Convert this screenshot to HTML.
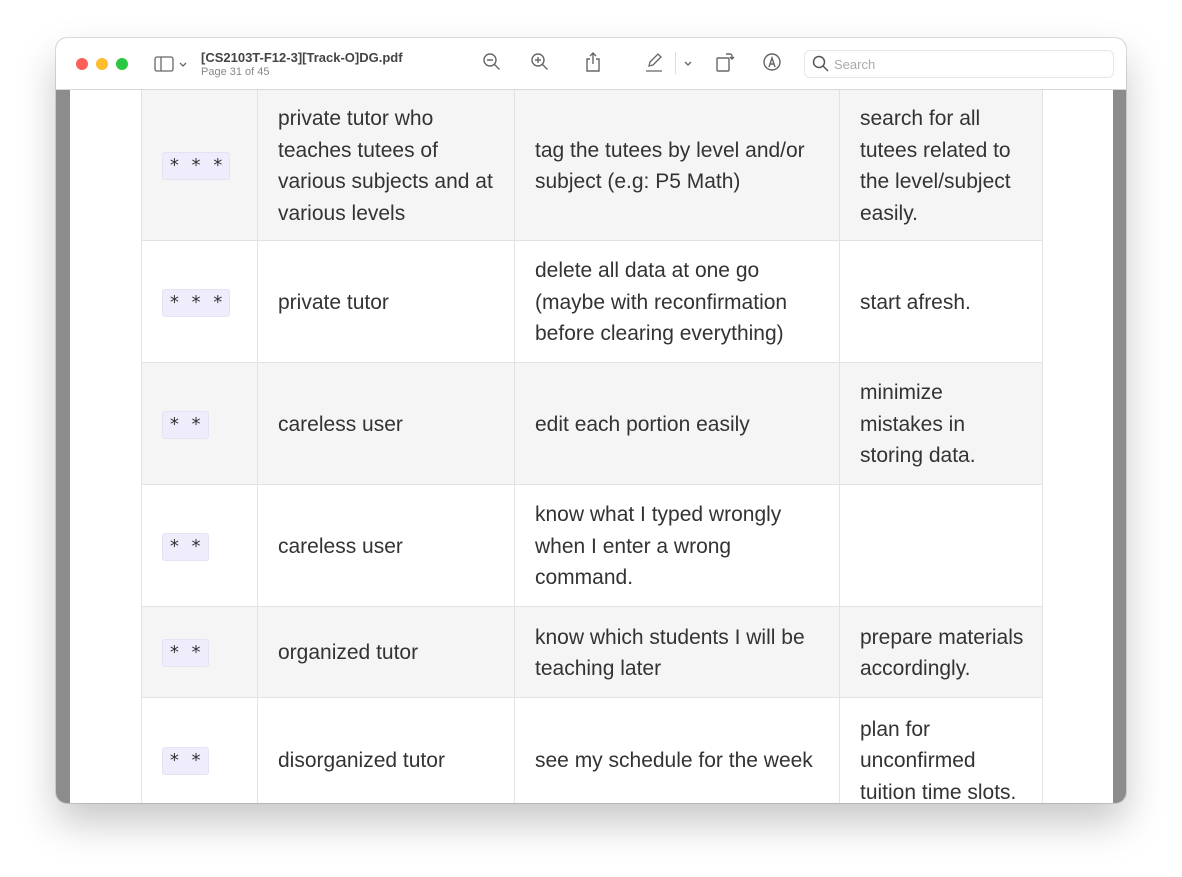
<!DOCTYPE html>
<html><head><style>
*{margin:0;padding:0;box-sizing:border-box}
body{width:1182px;height:877px;background:#fff;position:relative;overflow:hidden;font-family:"Liberation Sans",sans-serif}
.win{position:absolute;left:56px;top:38px;width:1070px;height:765px;border-radius:11px;background:#8c8c8c;overflow:hidden;box-shadow:0 20px 40px rgba(0,0,0,.22),0 0 0 1px rgba(0,0,0,.12)}
.tb{position:absolute;left:0;top:0;width:1070px;height:52px;background:#fff;border-bottom:1px solid #d8d8d8;z-index:2}
.dot{position:absolute;top:20px;width:12px;height:12px;border-radius:50%}
.page{position:absolute;left:14px;top:52px;width:1043px;height:713px;background:#fff}
.row{position:absolute;left:71px;width:902px;border-bottom:1px solid #e3e3e3}
.row.g{background:#f5f5f5}
.c{position:absolute;top:0;bottom:0;display:flex;align-items:center;font-size:21px;line-height:31.5px;color:#333;border-left:1px solid #e3e3e3;padding-left:20px;white-space:nowrap;padding-top:2px}
.badge{display:inline-block;background:#efedfc;border:1px solid #e4e2f3;border-radius:3px;font-family:"DejaVu Sans Mono",monospace;font-size:18px;line-height:26px;padding:0 6px;color:#333}
.ic{position:absolute;top:14px}
</style></head><body>
<div class="win">
<div class="tb">
<div class="dot" style="left:20px;background:#fe5f57"></div>
<div class="dot" style="left:40px;background:#febc2e"></div>
<div class="dot" style="left:60px;background:#28c840"></div>
<svg class="ic" style="left:98px;top:17px" width="36" height="18" viewBox="0 0 36 18" fill="none" stroke="#666" stroke-width="1.3"><rect x="1" y="2" width="18" height="14" rx="2"/><line x1="7" y1="2" x2="7" y2="16"/><path d="M26 8l3 3 3-3"/></svg>
<div style="position:absolute;left:145px;top:12px;font-size:13px;font-weight:bold;color:#444">[CS2103T-F12-3][Track-O]DG.pdf</div>
<div style="position:absolute;left:145px;top:28px;font-size:11px;color:#888">Page 31 of 45</div>
<svg class="ic" style="left:426px" width="20" height="20" viewBox="0 0 20 20" fill="none" stroke="#666" stroke-width="1.4"><circle cx="8" cy="8" r="6"/><path d="M12.5 12.5l5 5M5 8h6"/></svg>
<svg class="ic" style="left:474px" width="20" height="20" viewBox="0 0 20 20" fill="none" stroke="#666" stroke-width="1.4"><circle cx="8" cy="8" r="6"/><path d="M12.5 12.5l5 5M5 8h6M8 5v6"/></svg>
<svg class="ic" style="left:528px;top:13px" width="18" height="22" viewBox="0 0 18 22" fill="none" stroke="#666" stroke-width="1.4"><path d="M6 8H3v12h12V8h-3M9 13V2M6 5l3-3 3 3"/></svg>
<svg class="ic" style="left:588px" width="20" height="20" viewBox="0 0 20 20" fill="none" stroke="#666" stroke-width="1.3"><path d="M5 14l1-4 8-8 3 3-8 8-4 1zM2 19h16"/></svg>
<div style="position:absolute;left:619px;top:14px;width:1px;height:22px;background:#ddd"></div>
<svg class="ic" style="left:627px;top:22px" width="10" height="8" viewBox="0 0 10 8" fill="none" stroke="#666" stroke-width="1.3"><path d="M2 2l3 3 3-3"/></svg>
<svg class="ic" style="left:658px;top:13px" width="22" height="22" viewBox="0 0 22 22" fill="none" stroke="#666" stroke-width="1.4"><rect x="3" y="7" width="12" height="13" rx="1"/><path d="M12 3h4a2 2 0 0 1 2 2v3M16 6l2 2 2-2"/></svg>
<svg class="ic" style="left:706px" width="20" height="20" viewBox="0 0 20 20" fill="none" stroke="#666" stroke-width="1.4"><circle cx="10" cy="10" r="8"/><path d="M7 15l3-9 3 9M8 12h4"/></svg>
<div style="position:absolute;left:748px;top:12px;width:310px;height:28px;border:1px solid #e6e6e6;border-radius:6px"></div>
<svg class="ic" style="left:756px;top:17px" width="18" height="18" viewBox="0 0 18 18" fill="none" stroke="#555" stroke-width="1.5"><circle cx="7" cy="7" r="5.5"/><path d="M11 11l5 5"/></svg>
<div style="position:absolute;left:778px;top:19px;font-size:13px;color:#aaa">Search</div>
</div>
<div class="page">
<div class="row g" style="top:0;height:151px">
<div class="c" style="left:0;width:116px;border-left:1px solid #e3e3e3"><span class="badge">* * *</span></div>
<div class="c" style="left:116px;width:257px">private tutor who<br>teaches tutees of<br>various subjects and at<br>various levels</div>
<div class="c" style="left:373px;width:325px">tag the tutees by level and/or<br>subject (e.g: P5 Math)</div>
<div class="c" style="left:698px;width:204px;border-right:1px solid #e3e3e3">search for all<br>tutees related to<br>the level/subject<br>easily.</div>
</div>
<div class="row" style="top:151px;height:122px">
<div class="c" style="left:0;width:116px"><span class="badge">* * *</span></div>
<div class="c" style="left:116px;width:257px">private tutor</div>
<div class="c" style="left:373px;width:325px">delete all data at one go<br>(maybe with reconfirmation<br>before clearing everything)</div>
<div class="c" style="left:698px;width:204px;border-right:1px solid #e3e3e3">start afresh.</div>
</div>
<div class="row g" style="top:273px;height:122px">
<div class="c" style="left:0;width:116px"><span class="badge">* *</span></div>
<div class="c" style="left:116px;width:257px">careless user</div>
<div class="c" style="left:373px;width:325px">edit each portion easily</div>
<div class="c" style="left:698px;width:204px;border-right:1px solid #e3e3e3">minimize<br>mistakes in<br>storing data.</div>
</div>
<div class="row" style="top:395px;height:122px">
<div class="c" style="left:0;width:116px"><span class="badge">* *</span></div>
<div class="c" style="left:116px;width:257px">careless user</div>
<div class="c" style="left:373px;width:325px">know what I typed wrongly<br>when I enter a wrong<br>command.</div>
<div class="c" style="left:698px;width:204px;border-right:1px solid #e3e3e3"></div>
</div>
<div class="row g" style="top:517px;height:91px">
<div class="c" style="left:0;width:116px"><span class="badge">* *</span></div>
<div class="c" style="left:116px;width:257px">organized tutor</div>
<div class="c" style="left:373px;width:325px">know which students I will be<br>teaching later</div>
<div class="c" style="left:698px;width:204px;border-right:1px solid #e3e3e3">prepare materials<br>accordingly.</div>
</div>
<div class="row" style="top:608px;height:124px;border-bottom:none">
<div class="c" style="left:0;width:116px"><span class="badge">* *</span></div>
<div class="c" style="left:116px;width:257px">disorganized tutor</div>
<div class="c" style="left:373px;width:325px">see my schedule for the week</div>
<div class="c" style="left:698px;width:204px;border-right:1px solid #e3e3e3">plan for<br>unconfirmed<br>tuition time slots.</div>
</div>
</div>
</div>
</body></html>
